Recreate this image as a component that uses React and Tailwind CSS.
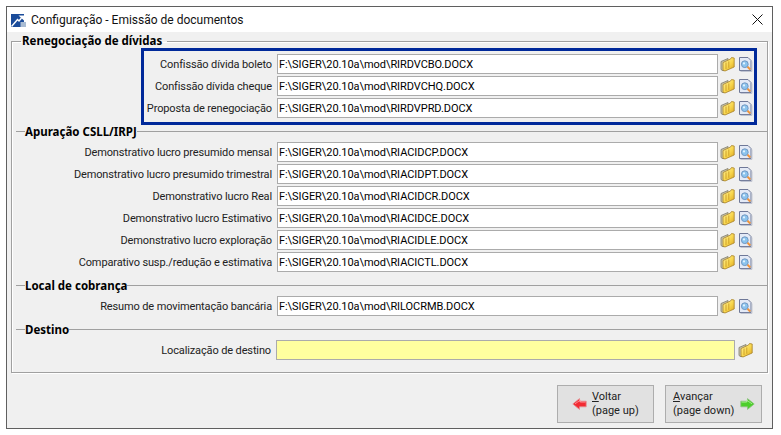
const FONT = "font-['Roboto','Liberation_Sans',sans-serif]";
const BOLD = "font-['Noto_Sans','Liberation_Sans',sans-serif] font-bold text-[11.5px]";

function FolderIcon() {
  return (
    <svg width="15" height="16" viewBox="0 0 15 16" className="shrink-0">
      <defs>
        <linearGradient id="folderFill" x1="0" y1="0" x2="1" y2="1">
          <stop offset="0" stopColor="#fff3a0" />
          <stop offset="0.55" stopColor="#f8d64c" />
          <stop offset="1" stopColor="#d9a01e" />
        </linearGradient>
      </defs>
      <path d="M1 5.5 L8 2.5 L8 13 L3 14.8 L1 13.5 Z" fill="#c9c5ae" stroke="#7f7b68" strokeWidth="0.8" />
      <path d="M3 6.5 L10.5 3 L11.5 1.5 L14.2 2 L14.2 11 L5 15 L3 14.3 Z" fill="url(#folderFill)" stroke="#a8832a" strokeWidth="0.8" />
      <path d="M6 6.5 L6 13 M8.8 5.5 L8.8 11.8" stroke="#c99c28" strokeWidth="0.9" />
    </svg>
  );
}

function DocIcon() {
  return (
    <svg width="15" height="16" viewBox="0 0 15 16" className="shrink-0">
      <path d="M1.5 1.5 L10 1.5 L13 4.5 L13 14.5 L1.5 14.5 Z" fill="#e4eaf6" stroke="#6f7898" strokeWidth="1" />
      <path d="M2.5 15.4 L13.9 15.4 L13.9 5.5" fill="none" stroke="#b4b9c8" strokeWidth="0.9" />
      <circle cx="6.8" cy="8.2" r="3.4" fill="#8cc4ee" stroke="#6d92bc" strokeWidth="0.9" />
      <circle cx="6" cy="7.4" r="1.1" fill="#e0f3ff" />
      <path d="M9.5 10.8 L12.3 13.4" stroke="#f0933a" strokeWidth="2" />
    </svg>
  );
}

function AppIcon() {
  return (
    <svg width="15" height="13" viewBox="0 0 15 13" className="mt-[2px] shrink-0">
      <rect x="0" y="0" width="13" height="13" fill="#1b4c9a" />
      <path d="M0.5 12.5 L6.5 5.5 L8 7 L10.5 4" fill="none" stroke="#ffffff" strokeWidth="1.5" />
      <path d="M7.5 1.5 L13 1.5 L13 6.5 Z" fill="#ffffff" />
      <rect x="9.5" y="8" width="5.5" height="5" fill="#a9bcd3" />
    </svg>
  );
}

function ArrowLeft() {
  return (
    <svg width="15" height="12" viewBox="0 0 15 12" className="shrink-0">
      <path d="M0.8 6 L7.5 0.6 L7.5 3.2 L14.2 3.2 L14.2 8.8 L7.5 8.8 L7.5 11.4 Z" fill="#f22b33" stroke="#e58b8f" strokeWidth="0.8" />
      <path d="M3 5.8 L8.3 2.2 L8.3 4.1 L13.5 4.1" fill="none" stroke="#ff9ca2" strokeWidth="0.8" />
    </svg>
  );
}

function ArrowRight() {
  return (
    <svg width="15" height="12" viewBox="0 0 15 12" className="shrink-0">
      <path d="M14.2 6 L7.5 0.6 L7.5 3.2 L0.8 3.2 L0.8 8.8 L7.5 8.8 L7.5 11.4 Z" fill="#4ccf2a" stroke="#8cc07d" strokeWidth="0.8" />
      <path d="M1.5 4.1 L6.7 4.1 L6.7 2.2 L12 5.8" fill="none" stroke="#b8f2a2" strokeWidth="0.8" />
    </svg>
  );
}

function Row({ label, value, dest = false }) {
  return (
    <div className="flex h-5 items-center">
      <span className="min-w-0 flex-1 whitespace-nowrap pr-[5px] pt-[3px] text-right tracking-[-0.13px]">{label}</span>
      {dest ? (
        <div className="mr-[1px] h-5 w-[459px] border border-[#ababab] bg-[#ffff9f]" />
      ) : (
        <div className="h-5 w-[441px] border border-[#ababab] bg-white pl-[1px] leading-[20px] tracking-[-0.06px] text-black">{value}</div>
      )}
      <div className="ml-[2px] flex w-[15px] justify-center">
        <FolderIcon />
      </div>
      {!dest && (
        <div className="ml-[3px] flex w-[15px] justify-center">
          <DocIcon />
        </div>
      )}
    </div>
  );
}

function Heading({ children }) {
  return (
    <div className="flex h-[13px] items-center pl-1">
      <div className="h-px w-[9px] bg-[#a0a0a0]" />
      <span className={`leading-3 text-black ${BOLD}`}>{children}</span>
      <div className="h-px flex-1 bg-[#a0a0a0]" />
    </div>
  );
}

const RENEG = [
  ['Confissão dívida boleto', 'F:\\SIGER\\20.10a\\mod\\RIRDVCBO.DOCX'],
  ['Confissão dívida cheque', 'F:\\SIGER\\20.10a\\mod\\RIRDVCHQ.DOCX'],
  ['Proposta de renegociação', 'F:\\SIGER\\20.10a\\mod\\RIRDVPRD.DOCX'],
];

const APUR = [
  ['Demonstrativo lucro presumido mensal', 'F:\\SIGER\\20.10a\\mod\\RIACIDCP.DOCX'],
  ['Demonstrativo lucro presumido trimestral', 'F:\\SIGER\\20.10a\\mod\\RIACIDPT.DOCX'],
  ['Demonstrativo lucro Real', 'F:\\SIGER\\20.10a\\mod\\RIACIDCR.DOCX'],
  ['Demonstrativo lucro Estimativo', 'F:\\SIGER\\20.10a\\mod\\RIACIDCE.DOCX'],
  ['Demonstrativo lucro exploração', 'F:\\SIGER\\20.10a\\mod\\RIACIDLE.DOCX'],
  ['Comparativo susp./redução e estimativa', 'F:\\SIGER\\20.10a\\mod\\RIACICTL.DOCX'],
];

export default function App() {
  return (
    <div className={`h-[435px] w-[781px] overflow-hidden bg-white p-[6px] pr-2 text-[11px] text-[#222] ${FONT}`}>
      <div className="flex h-[423px] w-[767px] flex-col border border-[#5f5f5f] bg-[#f0f0f0]">
        <div className="flex h-[25px] shrink-0 items-center bg-white pl-[4px] pr-[9px]">
          <AppIcon />
          <span className="ml-[5px] flex-1 text-[12px] text-[#111]">Configuração - Emissão de documentos</span>
          <svg width="11" height="11" viewBox="0 0 11 11">
            <path d="M0.5 0.5 L10.5 10.5 M10.5 0.5 L0.5 10.5" stroke="#111" strokeWidth="1" />
          </svg>
        </div>

        <div className="flex-1 px-[4px] pt-[2px]">
          <fieldset className="h-[339px] min-w-0 border border-[#a0a0a0] shadow-[inset_1px_1px_0_#fff,1px_1px_0_#fff]">
            <legend className={`ml-[9px] h-[14px] px-[1px] pr-[5px] leading-[14px] text-black ${BOLD}`}>
              Renegociação de dívidas
            </legend>

            <div className="ml-[129px] mr-[10px] flex flex-col gap-[2px] border-[3px] border-[#00299a] pb-[4px] pt-[3px] pr-[1px]">
              {RENEG.map(([label, value]) => (
                <Row key={label} label={label} value={value} />
              ))}
            </div>

            <Heading>Apuração CSLL/IRPJ</Heading>
            <div className="mt-[4px] flex flex-col gap-[2px] pr-[14px]">
              {APUR.map(([label, value]) => (
                <Row key={label} label={label} value={value} />
              ))}
            </div>

            <div className="mt-[7px]">
              <Heading>Local de cobrança</Heading>
            </div>
            <div className="mt-[4px] pr-[14px]">
              <Row label="Resumo de movimentação bancária" value={'F:\\SIGER\\20.10a\\mod\\RILOCRMB.DOCX'} />
            </div>

            <div className="mt-[7px]">
              <Heading>Destino</Heading>
            </div>
            <div className="mt-[4px] pr-[14px]">
              <Row label="Localização de destino" dest />
            </div>
          </fieldset>

          <div className="mt-[12px] flex justify-end gap-[11px] pr-[6px]">
            <button type="button" className="flex h-[38px] w-[97px] items-center border border-[#adadad] bg-[#e1e1e1] pl-[14px] text-left leading-[14px] text-[#222]">
              <ArrowLeft />
              <span className="ml-[5px]">
                <u>V</u>oltar
                <br />
                (page up)
              </span>
            </button>
            <button type="button" className="flex h-[38px] w-[97px] items-center border border-[#adadad] bg-[#e1e1e1] pl-[7px] text-left leading-[14px] text-[#222]">
              <span>
                <u>A</u>vançar
                <br />
                (page down)
              </span>
              <span className="ml-[6px]">
                <ArrowRight />
              </span>
            </button>
          </div>
        </div>
      </div>
    </div>
  );
}
